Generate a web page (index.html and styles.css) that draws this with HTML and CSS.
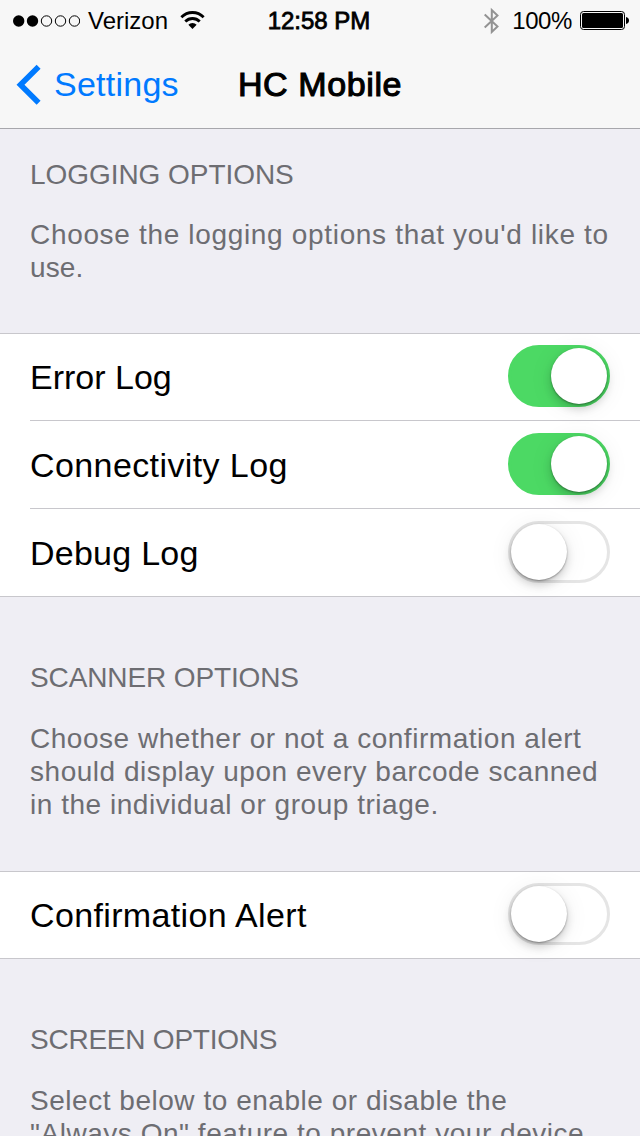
FILE: index.html
```html
<!DOCTYPE html>
<html lang="en">
<head>
<meta charset="utf-8">
<title>HC Mobile</title>
<link rel="stylesheet" href="styles.css">
</head>
<body>
<header class="top">
  <div class="status">
    <div class="status-left">
      <svg class="signal" width="67" height="12" viewBox="0 0 67 12"><circle cx="5.700" cy="6" r="5.700"/><circle cx="19.500" cy="6" r="5.700"/><g fill="none" stroke="#000" stroke-width="1"><circle cx="33.500" cy="6" r="5.200"/><circle cx="47.500" cy="6" r="5.200"/><circle cx="61.500" cy="6" r="5.200"/></g></svg>
      <span class="carrier">Verizon</span>
      <svg class="wifi" width="25" height="18" viewBox="0 0 26 18" preserveAspectRatio="none"><g fill="none" stroke="#000" stroke-width="2.900"><path d="M1.400 6.200A16.600 16.600 0 0 1 24.600 6.200"/><path d="M5.500 10.500A10.700 10.700 0 0 1 20.500 10.500"/></g><path d="M8.700 13.700A6.100 6.100 0 0 1 17.300 13.700L13 18Z"/></svg>
    </div>
    <span class="clock">12:58 PM</span>
    <div class="status-right">
      <svg class="bluetooth" width="17" height="28" viewBox="0 0 17 28"><path d="M1.700 7.500L14.500 19.500L8.800 25V3L14.500 8.500L1.700 20.500" fill="none" stroke="#939393" stroke-width="2"/></svg>
      <span class="percent">100%</span>
      <svg class="battery" width="50" height="20" viewBox="0 0 50 20"><rect x=".5" y=".5" width="44" height="18" rx="3" fill="none" stroke="#000"/><rect x="2" y="2" width="41" height="15" rx="1.500"/><path d="M46 6C48 6.200 49 7.700 49 9.500S48 12.800 46 13Z"/></svg>
    </div>
  </div>
  <nav class="nav">
    <a class="back"><svg class="chevron" width="28" height="42" viewBox="0 0 28 42"><path d="M24.600 2.700L6.500 20.700L24.600 38.700" fill="none" stroke="#007aff" stroke-width="5.600"/></svg><span class="back-label">Settings</span></a>
    <h1 class="title">HC Mobile</h1>
  </nav>
</header>
<main>
  <section class="group">
    <h2 class="heading h-logging">LOGGING OPTIONS</h2>
    <p class="note first-note"><span class="n1">Choose the logging options that you'd like to</span><br><span class="n2">use.</span></p>
    <ul class="rows">
      <li class="row"><span class="label l1">Error Log</span><span class="switch on"><span class="knob"></span></span></li>
      <li class="row"><span class="label l2">Connectivity Log</span><span class="switch on"><span class="knob"></span></span></li>
      <li class="row"><span class="label l3">Debug Log</span><span class="switch"><span class="knob"></span></span></li>
    </ul>
  </section>
  <section class="group later">
    <h2 class="heading h-scanner">SCANNER OPTIONS</h2>
    <p class="note"><span class="n3">Choose whether or not a confirmation alert</span><br><span class="n4">should display upon every barcode scanned</span><br><span class="n5">in the individual or group triage.</span></p>
    <ul class="rows">
      <li class="row"><span class="label l4">Confirmation Alert</span><span class="switch"><span class="knob"></span></span></li>
    </ul>
  </section>
  <section class="group later">
    <h2 class="heading h-screen">SCREEN OPTIONS</h2>
    <p class="note"><span class="n6">Select below to enable or disable the</span><br><span class="n7">"Always On" feature to prevent your device</span></p>
  </section>
</main>
</body>
</html>
```
FILE: styles.css
```css
* { box-sizing: border-box; margin: 0; padding: 0; }
body {
  width: 640px; height: 1136px; overflow: hidden;
  background: #efeef4; color: #000;
  font-family: "Liberation Sans", Arial, sans-serif;
}
svg { display: block; flex: none; }
.top { height: 129px; background: #f7f7f7; border-bottom: 1px solid #a7a7ac; }
.status { display: grid; grid-template-columns: 1fr auto 1fr; height: 40px; font-size: 24px; line-height: 28px; padding: 7px 10px 0 13px; white-space: nowrap; }
.status-left { display: flex; }
.signal { margin-top: 8px; }
.carrier { margin-left: 8px; }
.wifi { margin: 4px 0 0 12px; }
.clock { -webkit-text-stroke: .8px #000; padding-right: 5px; }
.status-right { display: flex; justify-content: flex-end; }
.percent { margin-left: 12px; letter-spacing: -.4px; }
.battery { margin: 4px 0 0 8px; }
.nav { display: grid; grid-template-columns: 1fr auto 1fr; height: 88px; align-items: start; font-size: 34px; line-height: 40px; padding: 24px 16px 0; white-space: nowrap; }
.back { display: flex; color: #007aff; }
.chevron { margin-left: -2px; }
.back-label { margin-left: 12px; letter-spacing: .25px; }
.title { font-size: 34px; font-weight: 400; -webkit-text-stroke: 1.1px #000; letter-spacing: .6px; }
.group { padding-top: 29px; }
.later { padding-top: 64px; }
.heading { font-size: 28px; font-weight: 400; line-height: 33px; padding-left: 30px; color: #6d6d72; white-space: nowrap; }
.h-logging { letter-spacing: -.05px; }
.h-scanner { letter-spacing: -.12px; }
.h-screen { letter-spacing: -.23px; }
.note { font-size: 28px; line-height: 33px; margin: 28px 0 50px; padding-left: 30px; color: #6d6d72; letter-spacing: .53px; white-space: nowrap; }
.first-note { margin: 27px 0 49px; }
.n1 { letter-spacing: .67px; }
.n2 { letter-spacing: .1px; }
.rows { list-style: none; background: #fff; border-top: 1px solid #c8c7cc; border-bottom: 1px solid #c8c7cc; }
.row { display: flex; justify-content: space-between; align-items: flex-start; height: 88px; margin-left: 30px; padding: 12px 30px 0 0; border-bottom: 1px solid #c8c7cc; }
.row:first-child { height: 87px; padding-top: 11px; }
.row:last-child { height: 87px; border-bottom: 0; }
.row:only-child { height: 86px; }
.label { font-size: 34px; line-height: 40px; margin-top: 12px; letter-spacing: .4px; }
.l1 { letter-spacing: 0; }
.l3 { letter-spacing: .25px; }
.l4 { letter-spacing: .36px; }
.switch { width: 102px; height: 62px; border-radius: 31px; border: 3px solid #e5e5e5; display: flex; align-items: center; }
.on { background: #4cd964; border-color: #4cd964; justify-content: flex-end; }
.knob { width: 56px; height: 56px; border-radius: 50%; background: #fff; box-shadow: 0 1px 2px rgba(0,0,0,.36), 0 5px 8px rgba(0,0,0,.16), 0 3px 24px rgba(0,0,0,.08); }
```
